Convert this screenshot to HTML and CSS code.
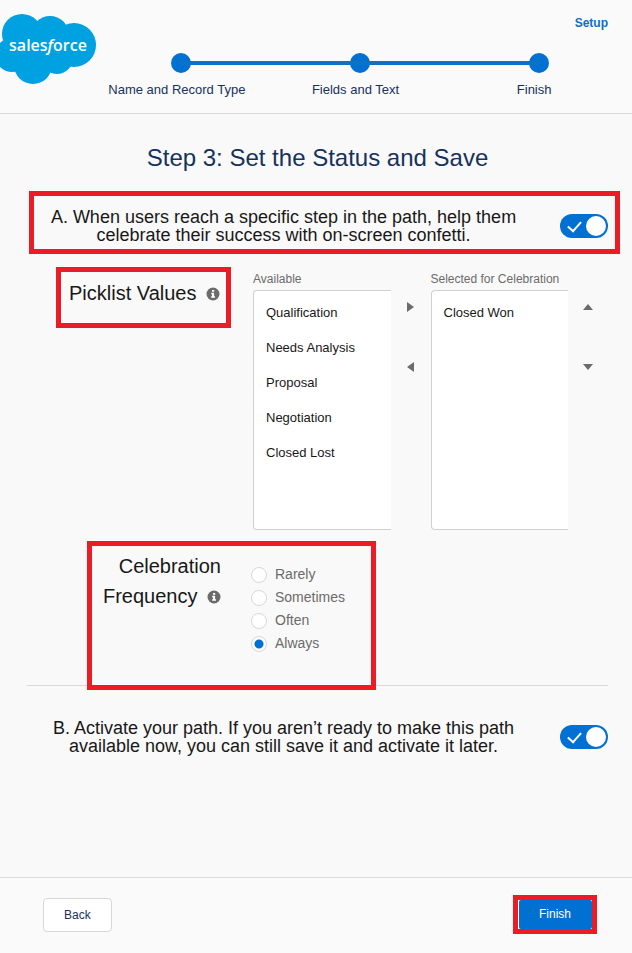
FILE: index.html
```html
<!DOCTYPE html>
<html lang="en">
<head>
    <meta charset="UTF-8">
    <meta name="viewport" content="width=device-width, initial-scale=1.0">
    <title>Path Settings</title>
    <link rel="stylesheet" href="styles.css">
</head>
<body>
    <header class="header">
        <svg class="logo" width="96" height="84" viewBox="0 0 96 84" role="img" aria-label="salesforce">
            <g fill="#00a1e0">
                <circle cx="22" cy="34" r="20"/>
                <circle cx="50" cy="35" r="19"/>
                <circle cx="74" cy="45" r="22"/>
                <circle cx="12" cy="55" r="17"/>
                <circle cx="33" cy="65" r="19"/>
                <circle cx="57" cy="58" r="16"/>
                <rect x="14" y="34" width="56" height="32"/>
            </g>
            <text class="logo-text" x="48" y="51" text-anchor="middle">sales<tspan font-style="italic">f</tspan>orce</text>
        </svg>
        <a class="setup-link" href="#">Setup</a>
        <ol class="progress">
            <li><span>Name and Record Type</span></li>
            <li><span>Fields and Text</span></li>
            <li><span>Finish</span></li>
        </ol>
    </header>

    <main>
        <h1>Step 3: Set the Status and Save</h1>

        <div class="setting highlight">
            <label for="celebrate">A. When users reach a specific step in the path, help them celebrate their success with on-screen confetti.</label>
            <input class="toggle" type="checkbox" id="celebrate" checked>
        </div>

        <div class="picklist">
            <div class="picklist-label highlight">
                Picklist Values
                <svg class="info" width="14" height="14" viewBox="0 0 14 14" aria-hidden="true">
                    <circle cx="7" cy="7" r="6.5" fill="#6b6b6b"/>
                    <path d="M6 3h2.200v1.800H6zM5.200 5.800h2.900v3.500h.9v1.500H5.100V9.300h.9V7.300h-.8z" fill="#fff"/>
                </svg>
            </div>
            <div class="lists">
                <label class="list-title" for="available">Available</label>
                <label class="list-title selected-title" for="selected">Selected for Celebration</label>
                <select id="available" multiple>
                    <option>Qualification</option>
                    <option>Needs Analysis</option>
                    <option>Proposal</option>
                    <option>Negotiation</option>
                    <option>Closed Lost</option>
                </select>
                <div class="arrows">
                    <button type="button" aria-label="Add"><svg width="12" height="12" viewBox="0 0 12 12"><path d="M2 1l7 5-7 5z"/></svg></button>
                    <button type="button" aria-label="Remove"><svg width="12" height="12" viewBox="0 0 12 12"><path d="M9 1L2 6l7 5z"/></svg></button>
                </div>
                <select id="selected" multiple>
                    <option>Closed Won</option>
                </select>
                <div class="arrows">
                    <button type="button" aria-label="Move up"><svg width="12" height="12" viewBox="0 0 12 12"><path d="M1 9l5-6 5 6z"/></svg></button>
                    <button type="button" aria-label="Move down"><svg width="12" height="12" viewBox="0 0 12 12"><path d="M1 3l5 6 5-6z"/></svg></button>
                </div>
            </div>
        </div>

        <div class="frequency highlight" role="radiogroup" aria-labelledby="frequencyLabel">
            <div class="frequency-label" id="frequencyLabel">
                Celebration Frequency
                <svg class="info" width="14" height="14" viewBox="0 0 14 14" aria-hidden="true">
                    <circle cx="7" cy="7" r="6.5" fill="#6b6b6b"/>
                    <path d="M6 3h2.200v1.800H6zM5.200 5.800h2.900v3.500h.9v1.500H5.100V9.300h.9V7.300h-.8z" fill="#fff"/>
                </svg>
            </div>
            <div class="radios">
                <label><input type="radio" name="frequency">Rarely</label>
                <label><input type="radio" name="frequency">Sometimes</label>
                <label><input type="radio" name="frequency">Often</label>
                <label><input type="radio" name="frequency" checked>Always</label>
            </div>
        </div>

        <hr>

        <div class="setting">
            <label for="activate">B. Activate your path. If you aren’t ready to make this path available now, you can still save it and activate it later.</label>
            <input class="toggle" type="checkbox" id="activate" checked>
        </div>
    </main>

    <footer class="footer">
        <button class="btn" type="button">Back</button>
        <div class="finish highlight">
            <button class="btn btn-primary" type="button">Finish</button>
        </div>
    </footer>
</body>
</html>
```

FILE: styles.css
```css
* {
    box-sizing: border-box;
}
body {
    font-family: "Liberation Sans", Arial, sans-serif;
    display: flex;
    flex-direction: column;
    min-height: 100vh;
    margin: 0;
    background-color: #f9f9f9;
    color: #181818;
}
button, select, input {
    font-family: inherit;
}
.highlight {
    border: 5px solid #ec1c24;
}

/* Header */
.header {
    display: grid;
    grid-template-columns: 92px 1fr;
    grid-template-rows: 53px 60px;
    padding-right: 4px;
    background-color: #fafafa;
    border-bottom: 1px solid #d8dbdb;
}
.logo {
    grid-row: 1 / 3;
    overflow: visible;
}
.logo-text {
    font-family: "Open Sans", sans-serif;
    font-size: 16px;
    font-weight: 600;
    fill: #fff;
}
.setup-link {
    justify-self: end;
    margin: 14px 20px 0 0;
    height: 18px;
    font-size: 12px;
    line-height: 18px;
    font-weight: bold;
    color: #0b6fcb;
    text-decoration: none;
}
.progress {
    display: grid;
    grid-template-columns: repeat(3, 1fr);
    margin: 0;
    padding: 0;
    list-style: none;
    font-size: 13px;
    line-height: 18px;
    color: #16325c;
    text-align: center;
}
.progress li {
    position: relative;
}
.progress li::before {
    content: "";
    display: block;
    width: 20px;
    height: 20px;
    margin: 0 auto 8px;
    border-radius: 50%;
    background-color: #0070d2;
}
.progress li + li::after {
    content: "";
    position: absolute;
    top: 8px;
    right: 50%;
    width: 100%;
    height: 4px;
    background-color: #0b72c6;
}
.progress span {
    display: block;
    padding-right: 9px;
}

/* Content */
h1 {
    margin: 29px 0 18px;
    padding-left: 3px;
    font-size: 24px;
    line-height: 30px;
    font-weight: normal;
    text-align: center;
    color: #16325c;
}
.setting {
    display: flex;
    align-items: center;
    gap: 27px;
    margin: 0 12px 0 29px;
    padding: 12px 7px 5px 0;
}
.setting:not(.highlight) {
    border: 5px solid transparent;
}
.setting label {
    flex: 1;
    font-size: 18px;
    line-height: 18px;
    text-align: center;
}
.toggle {
    appearance: none;
    position: relative;
    width: 48px;
    height: 24px;
    margin: 0;
    border-radius: 12px;
    background-color: #0070d2;
}
.toggle::before {
    content: "";
    position: absolute;
    top: 2px;
    right: 2px;
    width: 20px;
    height: 20px;
    border-radius: 50%;
    background-color: #fff;
}
.toggle::after {
    content: "";
    position: absolute;
    top: 7px;
    left: 8px;
    width: 11px;
    height: 6px;
    border: solid #fff;
    border-width: 0 0 2px 2px;
    transform: rotate(-48deg);
}
.info {
    margin-left: 4px;
    vertical-align: -1px;
}

/* Picklist */
.picklist {
    display: flex;
    align-items: flex-start;
    gap: 22px;
    margin: 13px 24px 0 56px;
}
.picklist-label {
    flex: none;
    width: 175px;
    height: 61px;
    padding: 6px 0 0 8px;
    font-size: 20px;
    line-height: 30px;
    white-space: nowrap;
}
.lists {
    flex: 1;
    display: grid;
    grid-template-columns: 1fr 40px 1fr 40px;
    padding-top: 2px;
}
.list-title {
    height: 21px;
    font-size: 12px;
    line-height: 20px;
    color: #6b6b6b;
    white-space: nowrap;
}
.selected-title {
    grid-column: 3 / 5;
}
select {
    appearance: none;
    width: 100%;
    height: 240px;
    margin: 0;
    padding: 4px 0;
    border: 1px solid #d0d0d0;
    border-right: none;
    border-radius: 4px 0 0 4px;
    background-color: #fff;
    color: #181818;
    font-size: 13px;
    overflow: hidden;
}
option {
    padding: 10px 12px;
}
.arrows {
    display: flex;
    flex-direction: column;
    align-items: center;
    gap: 38px;
    padding-top: 6px;
}
.arrows button {
    display: flex;
    padding: 5px;
    border: none;
    background: none;
}
.arrows path {
    fill: #6b6b6b;
}

/* Frequency */
.frequency {
    position: relative;
    z-index: 1;
    display: flex;
    gap: 30px;
    width: 289px;
    height: 149px;
    margin: 11px 0 0 87px;
    padding-top: 5px;
}
.frequency-label {
    width: 129px;
    font-size: 20px;
    line-height: 30px;
    text-align: right;
}
.radios {
    padding-top: 12px;
    font-size: 14px;
    color: #6b6b6b;
}
.radios label {
    display: flex;
    align-items: center;
    gap: 8px;
    line-height: 23px;
}
.radios input {
    appearance: none;
    width: 16px;
    height: 16px;
    margin: 0;
    border: 1px solid #d8d8d8;
    border-radius: 50%;
    background-color: #fff;
}
.radios input:checked {
    background-image: radial-gradient(circle, #0070d2 4px, transparent 5px);
}
hr {
    margin: -5px 24px 16px 27px;
    border: none;
    border-top: 1px solid #d8d8d8;
}

/* Footer */
.footer {
    display: flex;
    align-items: center;
    justify-content: space-between;
    height: 76px;
    margin-top: auto;
    padding: 0 35px 2px 43px;
    background-color: #fafafa;
    border-top: 1px solid #d8dbdb;
}
.btn {
    padding: 0 20px;
    border: 1px solid #d8d8d8;
    border-radius: 4px;
    background-color: #fff;
    color: #16325c;
    font-size: 12px;
    line-height: 32px;
}
.finish {
    padding-left: 1px;
    background-color: #fff;
}
.btn-primary {
    display: block;
    padding: 0 21px 0 20px;
    border: none;
    border-radius: 2px;
    background-color: #0070d2;
    color: #fff;
    line-height: 29px;
}
```
